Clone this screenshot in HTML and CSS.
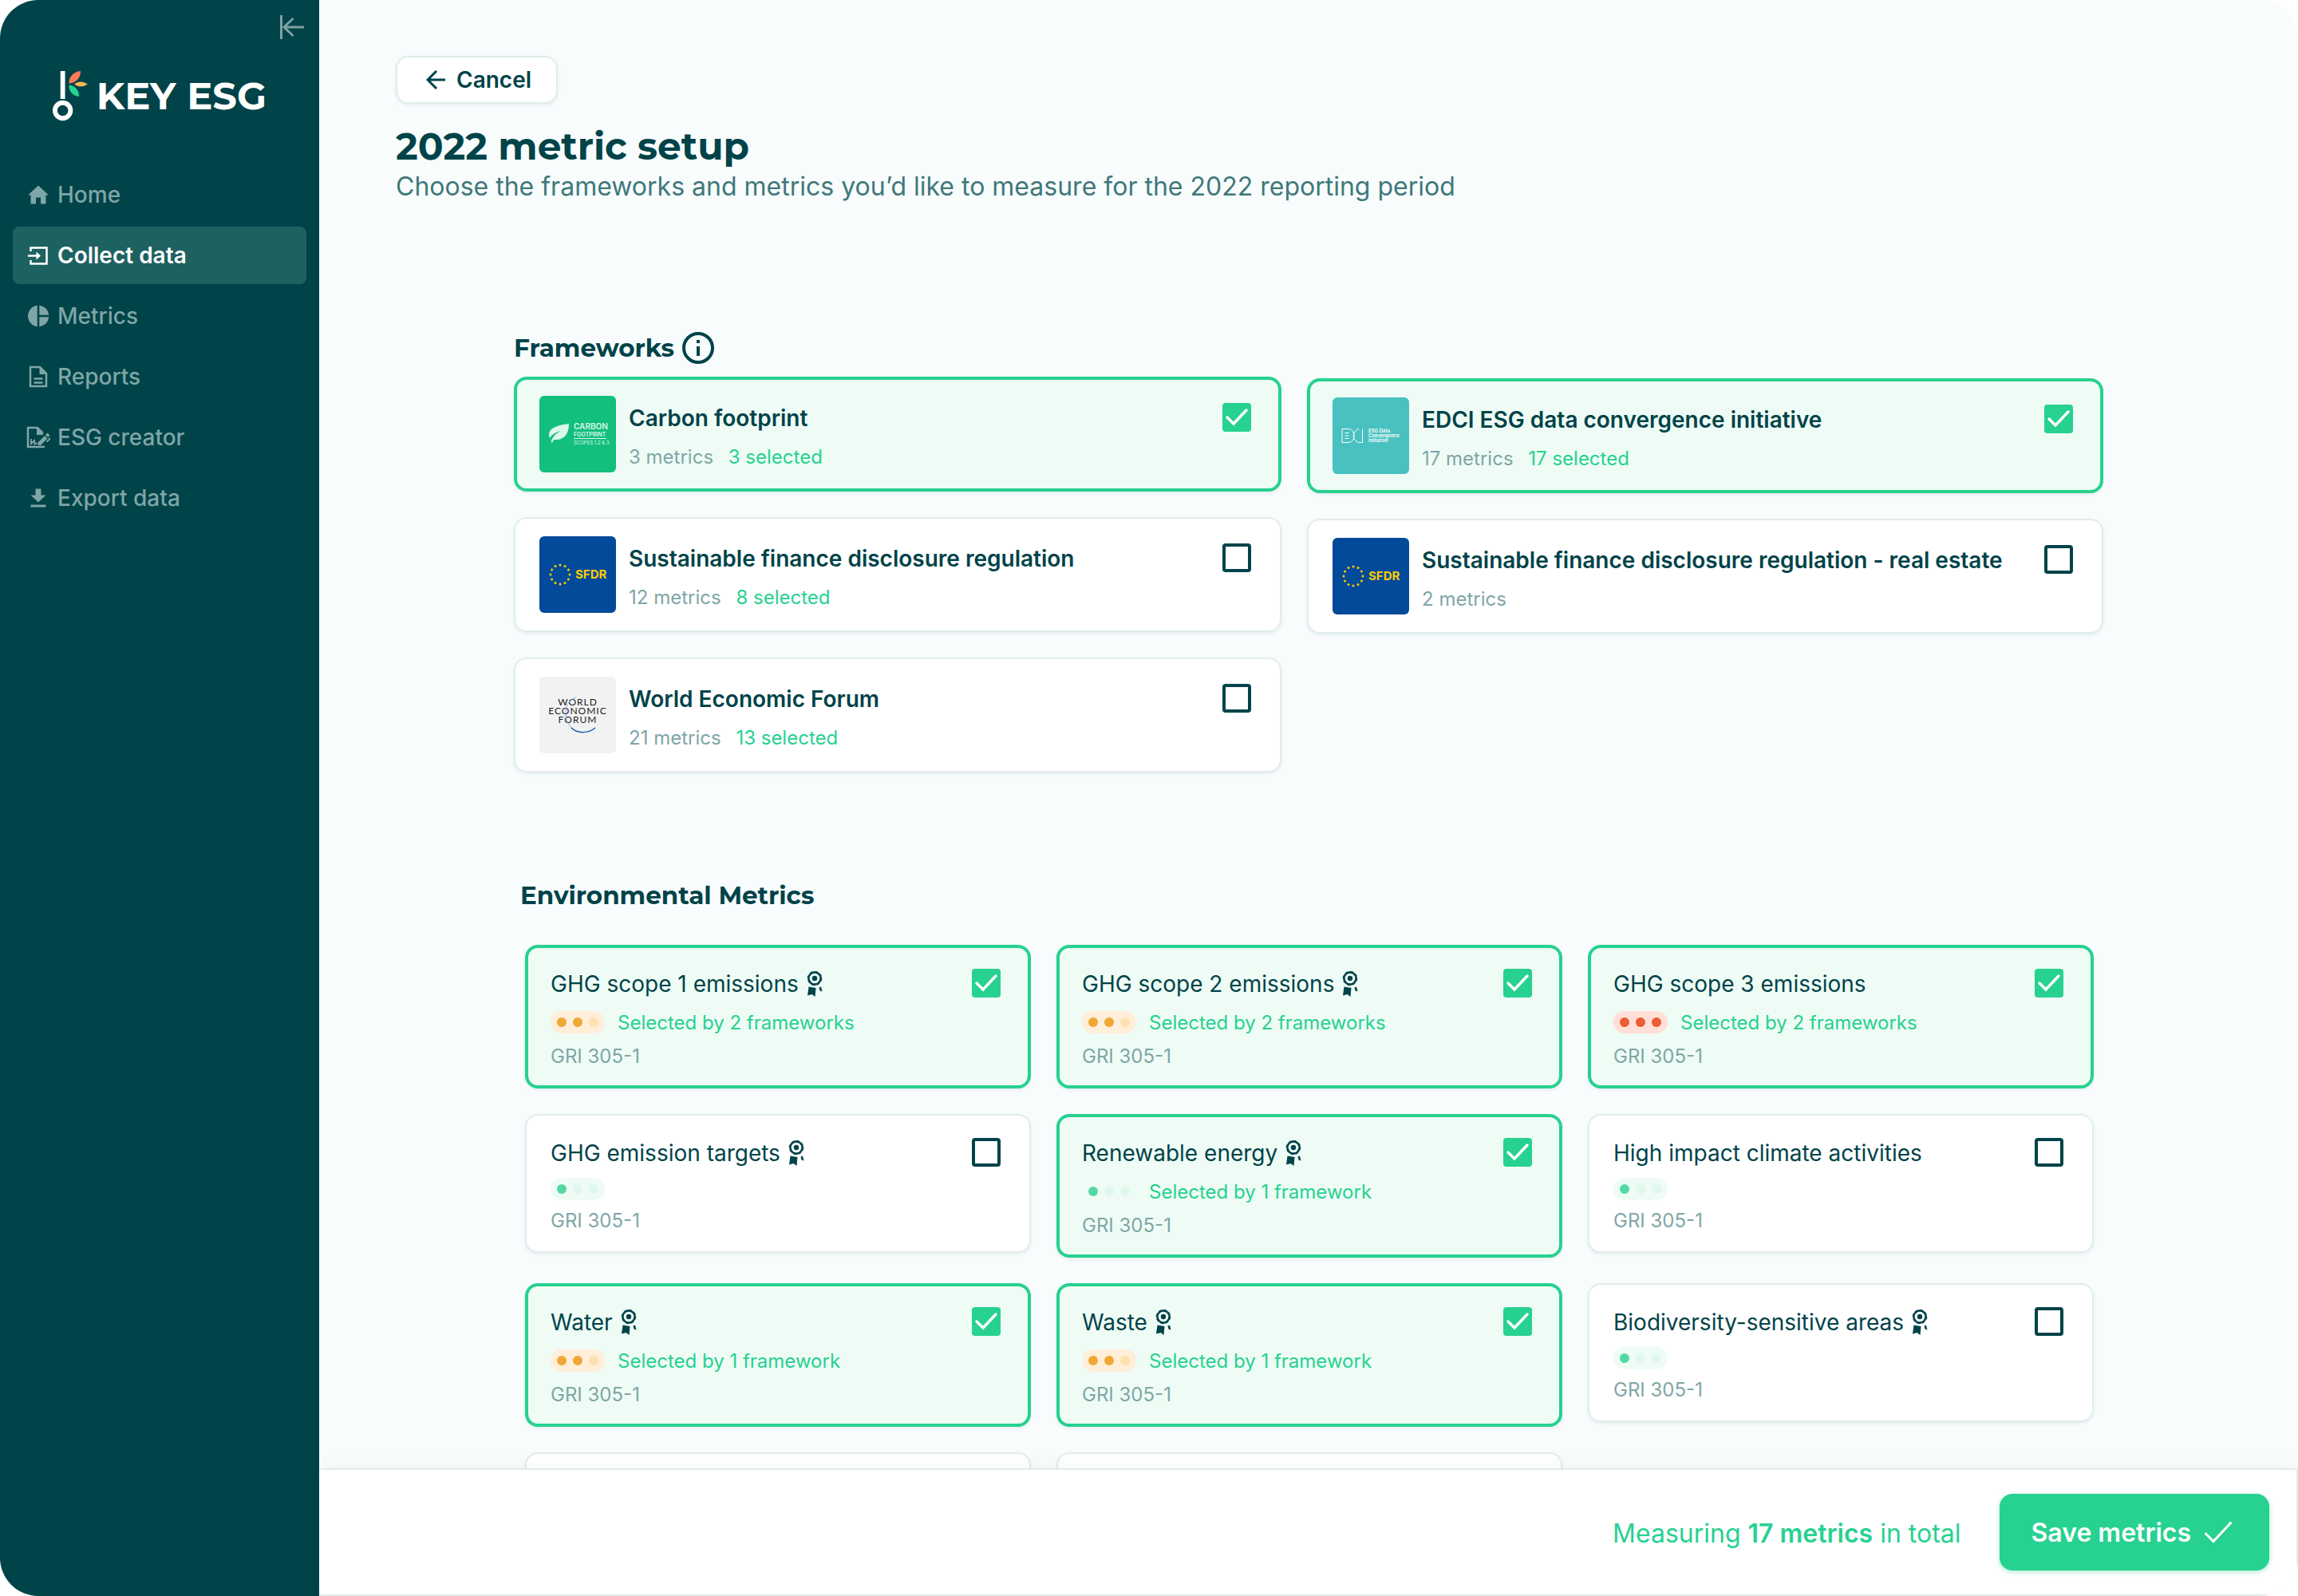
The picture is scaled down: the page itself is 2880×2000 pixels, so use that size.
FILE: index.html
```
<!DOCTYPE html>
<html lang="en">
<head>
    <meta charset="UTF-8">
    <meta name="viewport" content="width=device-width, initial-scale=1.0">
    <title>KEY ESG - 2022 metric setup</title>
    <link rel="stylesheet" href="styles.css">
</head>
<body>
    <!-- shared icons -->
    <svg class="sprite" aria-hidden="true">
        <symbol id="award" viewBox="0 0 20 32">
            <circle cx="10" cy="9" r="7.6" fill="none" stroke="currentColor" stroke-width="2.6"/>
            <circle cx="10" cy="9" r="8.8" fill="none" stroke="currentColor" stroke-width="1" stroke-dasharray="3.5 3.4"/>
            <circle cx="10" cy="9" r="3.2" fill="currentColor"/>
            <path fill="currentColor" d="M2.5 19.500l9 1.500-1 11-4-3L1 30.500zM15.500 20.500l2.500-1 1.500 6-3-1z"/>
        </symbol>
        <symbol id="eu-stars" viewBox="0 0 96 96">
            <g fill="#ffcc00">
                <circle cx="26" cy="36" r="1.5"/><circle cx="32" cy="37.6" r="1.5"/><circle cx="36.4" cy="42" r="1.5"/>
                <circle cx="38" cy="48" r="1.5"/><circle cx="36.4" cy="54" r="1.5"/><circle cx="32" cy="58.4" r="1.5"/>
                <circle cx="26" cy="60" r="1.5"/><circle cx="20" cy="58.4" r="1.5"/><circle cx="15.6" cy="54" r="1.5"/>
                <circle cx="14" cy="48" r="1.5"/><circle cx="15.6" cy="42" r="1.5"/><circle cx="20" cy="37.6" r="1.5"/>
            </g>
        </symbol>
    </svg>

    <div class="app">
        <aside class="sidebar">
            <button class="collapse" aria-label="Collapse menu">
                <svg width="30" height="30" viewBox="0 0 30 30" fill="none" stroke="currentColor" stroke-width="3"><path d="M1.5 0v30M30 15H5M16.5 4L5 15l11.5 11"/></svg>
            </button>
            <a class="logo" href="#">
                <svg width="46" height="66" viewBox="0 0 46 66">
                    <path fill="#fff" d="M10 0h6v36h-6z"/>
                    <circle cx="13" cy="51" r="10" fill="none" stroke="#fff" stroke-width="6"/>
                    <path fill="#ff7a59" d="M36 0c0 9-5 15-15 16C21 7 27 1 36 0z"/>
                    <path fill="#ffb84d" d="M28 17c5-4 11-4 17 0-6 4-12 4-17 0z"/>
                    <path fill="#27d190" d="M21 18c8 1 13 6 13 15-8-1-13-6-13-15z"/>
                </svg>
                <span>KEY ESG</span>
            </a>
            <nav class="menu">
                <a href="#"><svg viewBox="0 0 32 32" fill="currentColor"><path d="M16 4.5L29 16.5h-3.5v11H19v-8h-6v8H6.5v-11H3z"/></svg>Home</a>
                <a href="#" class="active"><svg viewBox="0 0 32 32" fill="none" stroke="currentColor" stroke-width="2.5"><path d="M6.5 11V6.5h20v20h-20V22M3 16.5h12"/><path fill="currentColor" stroke="none" d="M13.5 11.5l5.5 5-5.5 5z"/></svg>Collect data</a>
                <a href="#"><svg viewBox="0 0 32 32" fill="currentColor"><path d="M14.7 2.8v26.4a13.3 13.3 0 0 1 0-26.4zM17.3 2.8a13.3 13.3 0 0 1 12 11.9h-12zM17.3 17.3h12a13.3 13.3 0 0 1-12 11.9z"/></svg>Metrics</a>
                <a href="#"><svg viewBox="0 0 32 32" fill="none" stroke="currentColor" stroke-width="2.5"><path d="M7 4h11l8 8v16H6V4zM10.5 18.5h11M10.5 23.5h11"/><path fill="currentColor" stroke="none" d="M17.5 4v9H26z"/></svg>Reports</a>
                <a href="#"><svg viewBox="0 0 32 32" fill="none" stroke="currentColor" stroke-width="2.5"><path d="M24 28H3V4h12l7 7"/><path fill="currentColor" stroke="none" d="M14 3v10h8.5zM15.5 22.5l8.500-8.500 3.500 3.500-8.500 8.500h-3.500zM25 13l2.500-2.500 3 3L28 16z"/><path stroke-width="1.8" d="M7 18v6l4-4 .5 4.500 3-1.500M30 16.500v2l-3.500 3"/></svg>ESG creator</a>
                <a href="#"><svg viewBox="0 0 32 32" fill="currentColor"><path d="M12.5 4.5h7v8h6l-9.500 9-9.500-9h6zM6.500 24.500h19v3h-19z"/></svg>Export data</a>
            </nav>
        </aside>

        <main class="main">
            <div class="content">
                <header class="page-header">
                    <button class="cancel">
                        <svg width="24" height="24" viewBox="0 0 24 24" fill="none" stroke="currentColor" stroke-width="3"><path d="M24 12H2M13 1L2 12l11 11"/></svg>
                        Cancel
                    </button>
                    <h1>2022 metric setup</h1>
                    <p>Choose the frameworks and metrics you’d like to measure for the 2022 reporting period</p>
                </header>

                <section class="frameworks">
                    <h2>Frameworks
                        <svg width="40" height="40" viewBox="0 0 40 40" fill="none" stroke="currentColor" stroke-width="4"><circle cx="20" cy="20" r="18"/><path d="M20 18v12M20 10v4"/></svg>
                    </h2>
                    <div class="framework-columns">
                        <div class="framework-column">
                            <label class="card framework">
                                <svg class="tile carbon" viewBox="0 0 96 96">
                                    <path fill="#dcf7ec" d="M37 35c0 13-6 21-19 20l-1.5 3.5-2-.5c1-5 5-10 12-14-7 2-11 5-13.5 9C9 43 18 37 37 35z"/>
                                    <text x="43" y="42" class="carbon-name">CARBON</text>
                                    <text x="43" y="51" class="carbon-sub">FOOTPRINT</text>
                                    <path stroke="#dcf7ec" d="M43 53.5h41"/>
                                    <text x="43" y="61" class="carbon-scope">SCOPES 1,2 &amp; 3</text>
                                </svg>
                                <span class="info">
                                    <span class="title">Carbon footprint</span>
                                    <span class="meta">3 metrics <span class="count">3 selected</span></span>
                                </span>
                                <input type="checkbox" checked>
                            </label>
                            <label class="card framework">
                                <svg class="tile eu" viewBox="0 0 96 96"><use href="#eu-stars"/><text x="45" y="53" class="sfdr-text">SFDR</text></svg>
                                <span class="info">
                                    <span class="title">Sustainable finance disclosure regulation</span>
                                    <span class="meta">12 metrics <span class="count">8 selected</span></span>
                                </span>
                                <input type="checkbox">
                            </label>
                            <label class="card framework">
                                <svg class="tile wef" viewBox="0 0 96 96">
                                    <text x="48" y="36" class="wef-text">WORLD</text>
                                    <text x="48" y="47" class="wef-text">ECONOMIC</text>
                                    <text x="48" y="58" class="wef-text">FORUM</text>
                                    <path fill="none" stroke="#7fb0dc" d="M46 26C32 30 28 50 40 64"/>
                                    <path fill="none" stroke="#1c5fa8" stroke-width="1.5" d="M40 64c8 8 22 7 30 0"/>
                                </svg>
                                <span class="info">
                                    <span class="title">World Economic Forum</span>
                                    <span class="meta">21 metrics <span class="count">13 selected</span></span>
                                </span>
                                <input type="checkbox">
                            </label>
                        </div>
                        <div class="framework-column">
                            <label class="card framework">
                                <svg class="tile edci" viewBox="0 0 96 96">
                                    <path fill="none" stroke="#fff" d="M12 39.5h9c8 2 8 15 0 17h-9zM15.5 44.5h5M15.5 48h5M15.5 51.5h5M33 39.5c-9 3-9 14 0 17h4.5v-17"/>
                                    <text x="45" y="44" class="edci-text">ESG Data</text>
                                    <text x="45" y="50" class="edci-text">Convergence</text>
                                    <text x="45" y="56" class="edci-text">Initiative</text>
                                </svg>
                                <span class="info">
                                    <span class="title">EDCI ESG data convergence initiative</span>
                                    <span class="meta">17 metrics <span class="count">17 selected</span></span>
                                </span>
                                <input type="checkbox" checked>
                            </label>
                            <label class="card framework">
                                <svg class="tile eu" viewBox="0 0 96 96"><use href="#eu-stars"/><text x="45" y="53" class="sfdr-text">SFDR</text></svg>
                                <span class="info">
                                    <span class="title">Sustainable finance disclosure regulation - real estate</span>
                                    <span class="meta">2 metrics</span>
                                </span>
                                <input type="checkbox">
                            </label>
                        </div>
                    </div>
                </section>

                <section class="metrics">
                    <h2>Environmental Metrics</h2>
                    <div class="metric-grid">
                        <label class="card metric">
                            <span class="info">
                                <span class="title">GHG scope 1 emissions <svg class="award"><use href="#award"/></svg></span>
                                <span class="effort medium"><span class="dots"><i></i><i></i><i></i></span><span class="by">Selected by 2 frameworks</span></span>
                                <span class="code">GRI 305-1</span>
                            </span>
                            <input type="checkbox" checked>
                        </label>
                        <label class="card metric">
                            <span class="info">
                                <span class="title">GHG scope 2 emissions <svg class="award"><use href="#award"/></svg></span>
                                <span class="effort medium"><span class="dots"><i></i><i></i><i></i></span><span class="by">Selected by 2 frameworks</span></span>
                                <span class="code">GRI 305-1</span>
                            </span>
                            <input type="checkbox" checked>
                        </label>
                        <label class="card metric">
                            <span class="info">
                                <span class="title">GHG scope 3 emissions</span>
                                <span class="effort high"><span class="dots"><i></i><i></i><i></i></span><span class="by">Selected by 2 frameworks</span></span>
                                <span class="code">GRI 305-1</span>
                            </span>
                            <input type="checkbox" checked>
                        </label>
                        <label class="card metric">
                            <span class="info">
                                <span class="title">GHG emission targets <svg class="award"><use href="#award"/></svg></span>
                                <span class="effort low"><span class="dots"><i></i><i></i><i></i></span></span>
                                <span class="code">GRI 305-1</span>
                            </span>
                            <input type="checkbox">
                        </label>
                        <label class="card metric">
                            <span class="info">
                                <span class="title">Renewable energy <svg class="award"><use href="#award"/></svg></span>
                                <span class="effort low"><span class="dots"><i></i><i></i><i></i></span><span class="by">Selected by 1 framework</span></span>
                                <span class="code">GRI 305-1</span>
                            </span>
                            <input type="checkbox" checked>
                        </label>
                        <label class="card metric">
                            <span class="info">
                                <span class="title">High impact climate activities</span>
                                <span class="effort low"><span class="dots"><i></i><i></i><i></i></span></span>
                                <span class="code">GRI 305-1</span>
                            </span>
                            <input type="checkbox">
                        </label>
                        <label class="card metric">
                            <span class="info">
                                <span class="title">Water <svg class="award"><use href="#award"/></svg></span>
                                <span class="effort medium"><span class="dots"><i></i><i></i><i></i></span><span class="by">Selected by 1 framework</span></span>
                                <span class="code">GRI 305-1</span>
                            </span>
                            <input type="checkbox" checked>
                        </label>
                        <label class="card metric">
                            <span class="info">
                                <span class="title">Waste <svg class="award"><use href="#award"/></svg></span>
                                <span class="effort medium"><span class="dots"><i></i><i></i><i></i></span><span class="by">Selected by 1 framework</span></span>
                                <span class="code">GRI 305-1</span>
                            </span>
                            <input type="checkbox" checked>
                        </label>
                        <label class="card metric">
                            <span class="info">
                                <span class="title">Biodiversity-sensitive areas <svg class="award"><use href="#award"/></svg></span>
                                <span class="effort low"><span class="dots"><i></i><i></i><i></i></span></span>
                                <span class="code">GRI 305-1</span>
                            </span>
                            <input type="checkbox">
                        </label>
                        <div class="card metric"></div>
                        <div class="card metric"></div>
                    </div>
                </section>
            </div>

            <footer class="footer">
                <p>Measuring <b>17 metrics</b> in total</p>
                <button class="save">
                    Save metrics
                    <svg width="36" height="28" viewBox="0 0 36 28" fill="none" stroke="currentColor" stroke-width="3"><path d="M1.5 15L12 25.5l22.5-24"/></svg>
                </button>
            </footer>
        </main>
    </div>
</body>
</html>
```
FILE: styles.css
```
* {
    box-sizing: border-box;
}

body {
    margin: 0;
    background-color: #fff;
    color: #004349;
    font-family: 'Inter', sans-serif;
    font-size: 28px;
}

h1, h2, p {
    margin: 0;
}

button {
    font-family: inherit;
    cursor: pointer;
}

a {
    color: inherit;
    text-decoration: none;
}

.sprite {
    position: absolute;
    width: 0;
    height: 0;
}

.app {
    display: flex;
    height: 100vh;
    border-radius: 48px;
    overflow: hidden;
}

/* sidebar */
.sidebar {
    display: flex;
    flex-direction: column;
    flex: none;
    width: 400px;
    padding: 16px;
    background-color: #004349;
    color: #7fa6a6;
}

.collapse {
    display: flex;
    align-self: flex-end;
    padding: 3px;
    border: none;
    background: none;
    color: #7fa1a4;
}

.logo {
    display: flex;
    align-items: flex-start;
    gap: 10px;
    margin: 36px 50px 54px;
    color: #fff;
    font-family: 'Montserrat', 'Inter', sans-serif;
    font-size: 48px;
    font-weight: 700;
    line-height: 64px;
    white-space: nowrap;
}

.menu {
    display: flex;
    flex-direction: column;
    gap: 4px;
}

.menu a {
    display: flex;
    align-items: center;
    gap: 8px;
    height: 72px;
    padding: 0 16px;
    border-radius: 8px;
    font-weight: 500;
}

.menu svg {
    width: 32px;
    height: 32px;
}

.menu .active {
    background-color: #1e6161;
    color: #fff;
    font-weight: 600;
}

/* main area */
.main {
    display: flex;
    flex-direction: column;
    flex: 1;
    min-width: 0;
    background-color: #f8fcfd;
}

.content {
    flex: 1;
    min-height: 0;
    padding: 70px 96px 0;
    overflow: hidden;
}

.cancel {
    display: flex;
    align-items: center;
    gap: 14px;
    height: 60px;
    padding: 0 31px 0 36px;
    border: 2px solid #e0edeb;
    border-radius: 16px;
    background-color: #fff;
    color: #004349;
    font-size: 28px;
    font-weight: 600;
    box-shadow: 0 2px 4px rgba(0, 67, 73, 0.08);
}

h1 {
    margin-top: 24px;
    font-family: 'Montserrat', 'Inter', sans-serif;
    font-size: 47px;
    font-weight: 700;
    line-height: 60px;
}

h2 {
    display: flex;
    align-items: center;
    gap: 10px;
    height: 40px;
    font-family: 'Montserrat', 'Inter', sans-serif;
    font-size: 31px;
    font-weight: 700;
}

.page-header p {
    color: #407879;
    font-size: 32px;
    line-height: 40px;
}

/* cards */
.card {
    display: flex;
    align-items: flex-start;
    padding: 28px 36px 0 30px;
    border: 2px solid #e0edeb;
    border-radius: 16px;
    background-color: #fff;
    box-shadow: 0 2px 4px rgba(0, 67, 73, 0.08);
}

.card:has(input:checked) {
    padding: 26px 34px 0 28px;
    border: 4px solid #27d190;
    background-color: #eefcf5;
}

.card .info {
    display: flex;
    flex-direction: column;
    flex: 1;
}

.card .title {
    white-space: nowrap;
}

.card input {
    appearance: none;
    flex: none;
    width: 36px;
    height: 36px;
    margin: 0;
    border: 4px solid #004349;
    border-radius: 4px;
}

.card input:checked {
    border: none;
    background: #27d190 url("data:image/svg+xml,%3Csvg xmlns='http://www.w3.org/2000/svg' viewBox='0 0 36 36'%3E%3Cpath d='M6 18l8 8L30 9' fill='none' stroke='white' stroke-width='3.5' stroke-linecap='round'/%3E%3C/svg%3E");
}

/* frameworks */
.frameworks {
    margin: 162px 148px 0;
}

.framework-columns {
    display: grid;
    grid-template-columns: 962fr 998fr;
    gap: 32px;
    margin-top: 16px;
}

.framework-column {
    display: flex;
    flex-direction: column;
    gap: 32px;
}

.framework-column + .framework-column {
    padding-top: 2px;
}

.framework {
    height: 144px;
    padding-top: 22px;
}

.framework:has(input:checked) {
    padding-top: 20px;
}

.framework .info {
    margin-left: 16px;
}

.framework .title {
    padding-top: 10px;
    font-weight: 600;
    line-height: 36px;
}

.framework .meta {
    margin-top: 16px;
    color: #7fa6a6;
    font-size: 24px;
    line-height: 30px;
}

.framework .count {
    margin-left: 12px;
    color: #27d190;
}

.framework input {
    margin-top: 9px;
}

.tile {
    flex: none;
    width: 96px;
    height: 96px;
    border-radius: 6px;
}

.carbon {
    background-color: #12bf7d;
    fill: #dcf7ec;
}

.carbon-name {
    font-size: 10px;
    font-weight: 600;
}

.carbon-sub {
    font-size: 7px;
    font-weight: 600;
}

.carbon-scope {
    font-size: 6px;
}

.eu {
    background-color: #044a9a;
}

.sfdr-text {
    fill: #ffcc00;
    font-size: 15px;
    font-weight: 700;
}

.wef {
    background-color: #f2f2f2;
}

.wef-text {
    fill: #222;
    font-family: 'Lato', sans-serif;
    font-size: 12px;
    letter-spacing: 1px;
    text-anchor: middle;
}

.edci {
    background-color: #4ac1c1;
}

.edci-text {
    fill: #fff;
    font-size: 6px;
    font-weight: 600;
}

/* environmental metrics */
.metrics {
    margin: 134px 160px 0 162px;
}

.metrics h2 {
    margin-left: -6px;
}

.metric-grid {
    display: grid;
    grid-template-columns: repeat(3, 1fr);
    grid-auto-rows: 180px;
    align-items: start;
    gap: 32px;
    margin-top: 42px;
}

.metric {
    height: 174px;
}

.metric:has(.by) {
    height: 180px;
}

.metric .title {
    display: flex;
    align-items: center;
    gap: 10px;
    padding-bottom: 12px;
    line-height: 38px;
}

.award {
    width: 20px;
    height: 32px;
}

.effort {
    display: flex;
    align-items: center;
    gap: 16px;
    font-size: 24px;
}

.dots {
    display: flex;
    align-items: center;
    gap: 8px;
    height: 28px;
    padding: 0 8px;
    border-radius: 14px;
}

.dots i {
    width: 12px;
    height: 12px;
    border-radius: 50%;
}

.by {
    padding-top: 2px;
    color: #27d190;
    line-height: 32px;
}

.low .dots {
    background-color: #eefcf5;
}

.low i {
    background-color: #dff7ec;
}

.low i:first-child {
    background-color: #52d9a3;
}

.medium .dots {
    background-color: #ffeed8;
}

.medium i {
    background-color: #efa736;
}

.medium i:last-child {
    background-color: #ffdfb0;
}

.high .dots {
    background-color: #ffdfd8;
}

.high i {
    background-color: #ee5c36;
}

.code {
    padding-top: 10px;
    color: #7fa6a6;
    font-size: 24px;
    line-height: 32px;
}

/* footer */
.footer {
    display: flex;
    align-items: center;
    justify-content: flex-end;
    gap: 48px;
    height: 160px;
    padding-right: 34px;
    border: 2px solid #e0edeb;
    border-left: none;
    background-color: #fff;
    box-shadow: 0 -4px 20px rgba(0, 67, 73, 0.04);
}

.footer p {
    padding-top: 2px;
    color: #27d190;
    font-size: 32px;
}

.footer b {
    font-weight: 600;
}

.save {
    display: flex;
    align-items: center;
    gap: 16px;
    height: 96px;
    padding: 0 46px 0 40px;
    border: none;
    border-radius: 16px;
    background-color: #27d190;
    color: #fff;
    font-size: 32px;
    font-weight: 600;
    box-shadow: 0 2px 6px rgba(39, 209, 144, 0.4);
}
```
